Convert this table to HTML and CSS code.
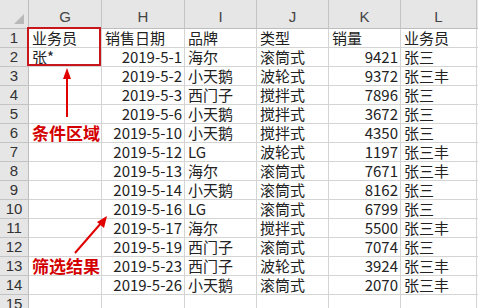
FILE: index.html
```html
<!DOCTYPE html>
<html lang="zh">
<head>
<meta charset="utf-8">
<link rel="stylesheet" href="styles.css">
</head>
<body>
<div class="sheet">
  <div class="grid">
    <div class="corner"><span class="tri"></span></div>
    <div class="colh">G</div><div class="colh">H</div><div class="colh">I</div><div class="colh">J</div><div class="colh">K</div><div class="colh">L</div><div class="colh last"></div>

    <div class="rowh">1</div><div class="c">业务员</div><div class="c">销售日期</div><div class="c">品牌</div><div class="c">类型</div><div class="c">销量</div><div class="c">业务员</div><div class="c"></div>
    <div class="rowh">2</div><div class="c">张*</div><div class="c r">2019-5-1</div><div class="c">海尔</div><div class="c">滚筒式</div><div class="c r">9421</div><div class="c">张三</div><div class="c"></div>
    <div class="rowh">3</div><div class="c"></div><div class="c r">2019-5-2</div><div class="c">小天鹅</div><div class="c">波轮式</div><div class="c r">9372</div><div class="c">张三丰</div><div class="c"></div>
    <div class="rowh">4</div><div class="c"></div><div class="c r">2019-5-3</div><div class="c">西门子</div><div class="c">搅拌式</div><div class="c r">7896</div><div class="c">张三</div><div class="c"></div>
    <div class="rowh">5</div><div class="c"></div><div class="c r">2019-5-6</div><div class="c">小天鹅</div><div class="c">搅拌式</div><div class="c r">3672</div><div class="c">张三</div><div class="c"></div>
    <div class="rowh">6</div><div class="c"></div><div class="c r">2019-5-10</div><div class="c">小天鹅</div><div class="c">搅拌式</div><div class="c r">4350</div><div class="c">张三</div><div class="c"></div>
    <div class="rowh">7</div><div class="c"></div><div class="c r">2019-5-12</div><div class="c">LG</div><div class="c">波轮式</div><div class="c r">1197</div><div class="c">张三丰</div><div class="c"></div>
    <div class="rowh">8</div><div class="c"></div><div class="c r">2019-5-13</div><div class="c">海尔</div><div class="c">滚筒式</div><div class="c r">7671</div><div class="c">张三丰</div><div class="c"></div>
    <div class="rowh">9</div><div class="c"></div><div class="c r">2019-5-14</div><div class="c">小天鹅</div><div class="c">滚筒式</div><div class="c r">8162</div><div class="c">张三</div><div class="c"></div>
    <div class="rowh">10</div><div class="c"></div><div class="c r">2019-5-16</div><div class="c">LG</div><div class="c">滚筒式</div><div class="c r">6799</div><div class="c">张三</div><div class="c"></div>
    <div class="rowh">11</div><div class="c"></div><div class="c r">2019-5-17</div><div class="c">海尔</div><div class="c">搅拌式</div><div class="c r">5500</div><div class="c">张三丰</div><div class="c"></div>
    <div class="rowh">12</div><div class="c"></div><div class="c r">2019-5-19</div><div class="c">西门子</div><div class="c">滚筒式</div><div class="c r">7074</div><div class="c">张三</div><div class="c"></div>
    <div class="rowh">13</div><div class="c"></div><div class="c r">2019-5-23</div><div class="c">西门子</div><div class="c">波轮式</div><div class="c r">3924</div><div class="c">张三丰</div><div class="c"></div>
    <div class="rowh">14</div><div class="c"></div><div class="c r">2019-5-26</div><div class="c">小天鹅</div><div class="c">滚筒式</div><div class="c r">2070</div><div class="c">张三丰</div><div class="c"></div>
    <div class="rowh">15</div><div class="c"></div><div class="c"></div><div class="c"></div><div class="c"></div><div class="c"></div><div class="c"></div><div class="c"></div>
  </div>

  <div class="crit-box"></div>
  <div class="label label-crit">条件区域</div>
  <div class="label label-res">筛选结果</div>
  <svg class="arrows" width="478" height="308" viewBox="0 0 478 308">
    <line x1="67" y1="117" x2="67" y2="76" stroke="#e00000" stroke-width="2"/>
    <polygon points="67,68 63,79 71,79" fill="#e00000"/>
    <line x1="75" y1="253" x2="102" y2="222" stroke="#e00000" stroke-width="2"/>
    <polygon points="107,216 97,222 104,228" fill="#e00000"/>
  </svg>
</div>
</body>
</html>
```

FILE: styles.css
```css
html, body {
  margin: 0;
  padding: 0;
  background: #ffffff;
  overflow: hidden;
}

.sheet {
  position: relative;
  width: 478px;
  height: 308px;
  overflow: hidden;
  font-family: "Noto Sans CJK SC", "Liberation Sans", sans-serif;
  font-size: 15px;
  color: #222;
}

.grid {
  display: grid;
  grid-template-columns: 29px 73px 83px 72px 72px 72px 76px 80px;
  grid-template-rows: 29px;
  grid-auto-rows: 19px;
  width: 557px;
}

.grid > div {
  box-sizing: border-box;
  border-right: 1px solid #d4d4d4;
  border-bottom: 1px solid #d4d4d4;
  white-space: nowrap;
}

.corner {
  background: #e6e6e6;
  position: relative;
  border-color: #bdbdbd !important;
}

.tri {
  position: absolute;
  right: 4px;
  bottom: 4px;
  width: 0;
  height: 0;
  border-left: 10px solid transparent;
  border-bottom: 10px solid #b8b8b8;
}

.colh {
  background: #e6e6e6;
  color: #444;
  text-align: center;
  line-height: 22px;
  padding-top: 6px;
  border-right-color: #c4c4c4 !important;
  border-bottom-color: #bdbdbd !important;
  font-family: "Liberation Sans", sans-serif;
  font-size: 15px;
}

.rowh {
  background: #e6e6e6;
  color: #333;
  text-align: center;
  line-height: 18px;
  border-right-color: #bdbdbd !important;
  border-bottom-color: #c4c4c4 !important;
  font-family: "Liberation Sans", sans-serif;
  font-size: 15px;
}

.c {
  line-height: 18px;
  padding: 0 2px 0 3px;
}

.c.r {
  text-align: right;
}

.crit-box {
  position: absolute;
  left: 27px;
  top: 27px;
  width: 74px;
  height: 39px;
  box-sizing: border-box;
  border: 2px solid #c8161d;
}

.label {
  position: absolute;
  left: 32px;
  color: #d40000;
  font-weight: bold;
  font-size: 17px;
  line-height: 20px;
}

.label-crit {
  top: 123px;
}

.label-res {
  top: 256px;
}

.arrows {
  position: absolute;
  left: 0;
  top: 0;
}
```
